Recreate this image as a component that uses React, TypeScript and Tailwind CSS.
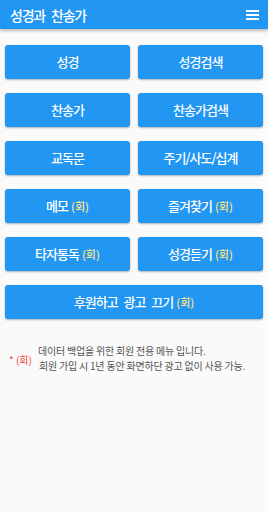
import React from "react";

const font = { fontFamily: '"Noto Sans CJK KR", "Noto Sans", sans-serif' };

function Btn({ label, member, full }: { label: string; member?: boolean; full?: boolean }) {
  return (
    <button
      className={`h-[34px] rounded-[3px] bg-[#2196f3] text-white text-[13px] font-medium flex items-center justify-center shadow-[0_1px_2px_rgba(0,0,0,0.3)] ${full ? "col-span-2" : ""}`}
    >
      <span className="tracking-[-1px] [word-spacing:4px]">{label}</span>
      {member && <span className="ml-[3px] text-[11px] text-[#ffe57f]">(회)</span>}
    </button>
  );
}

export default function App() {
  return (
    <div className="w-[268px] h-[512px] bg-[#fafafa] flex flex-col" style={font}>
      <div className="h-[29px] bg-[#2196f3] flex items-center justify-between pl-[10px] pr-[9px] shadow-[0_2px_3px_rgba(0,0,0,0.25)] relative z-10">
        <span className="text-white text-[14px] font-medium leading-none tracking-[-1.2px] [word-spacing:4px]">성경과 찬송가</span>
        <svg width="13" height="10" viewBox="0 0 13 10">
          <rect x="0" y="0" width="13" height="2" fill="white" />
          <rect x="0" y="4" width="13" height="2" fill="white" />
          <rect x="0" y="8" width="13" height="2" fill="white" />
        </svg>
      </div>
      <div className="grid grid-cols-2 gap-x-[8px] gap-y-[14px] px-[5px] pt-[16px]">
        <Btn label="성경" />
        <Btn label="성경검색" />
        <Btn label="찬송가" />
        <Btn label="찬송가검색" />
        <Btn label="교독문" />
        <Btn label="주기/사도/십계" />
        <Btn label="메모" member />
        <Btn label="즐겨찾기" member />
        <Btn label="타자통독" member />
        <Btn label="성경듣기" member />
        <Btn label="후원하고 광고 끄기" member full />
      </div>
      <div className="flex items-center pl-[9px] pt-[24px]">
        <span className="text-[#f44336] text-[10px] mr-[6px] mt-[2px]">* (회)</span>
        <div className="text-[#555] text-[10px] leading-[15px] tracking-[-0.2px]">
          <div>데이터 백업을 위한 회원 전용 메뉴 입니다.</div>
          <div className="pl-[1px]">회원 가입 시 1년 동안 화면하단 광고 없이 사용 가능.</div>
        </div>
      </div>
    </div>
  );
}
